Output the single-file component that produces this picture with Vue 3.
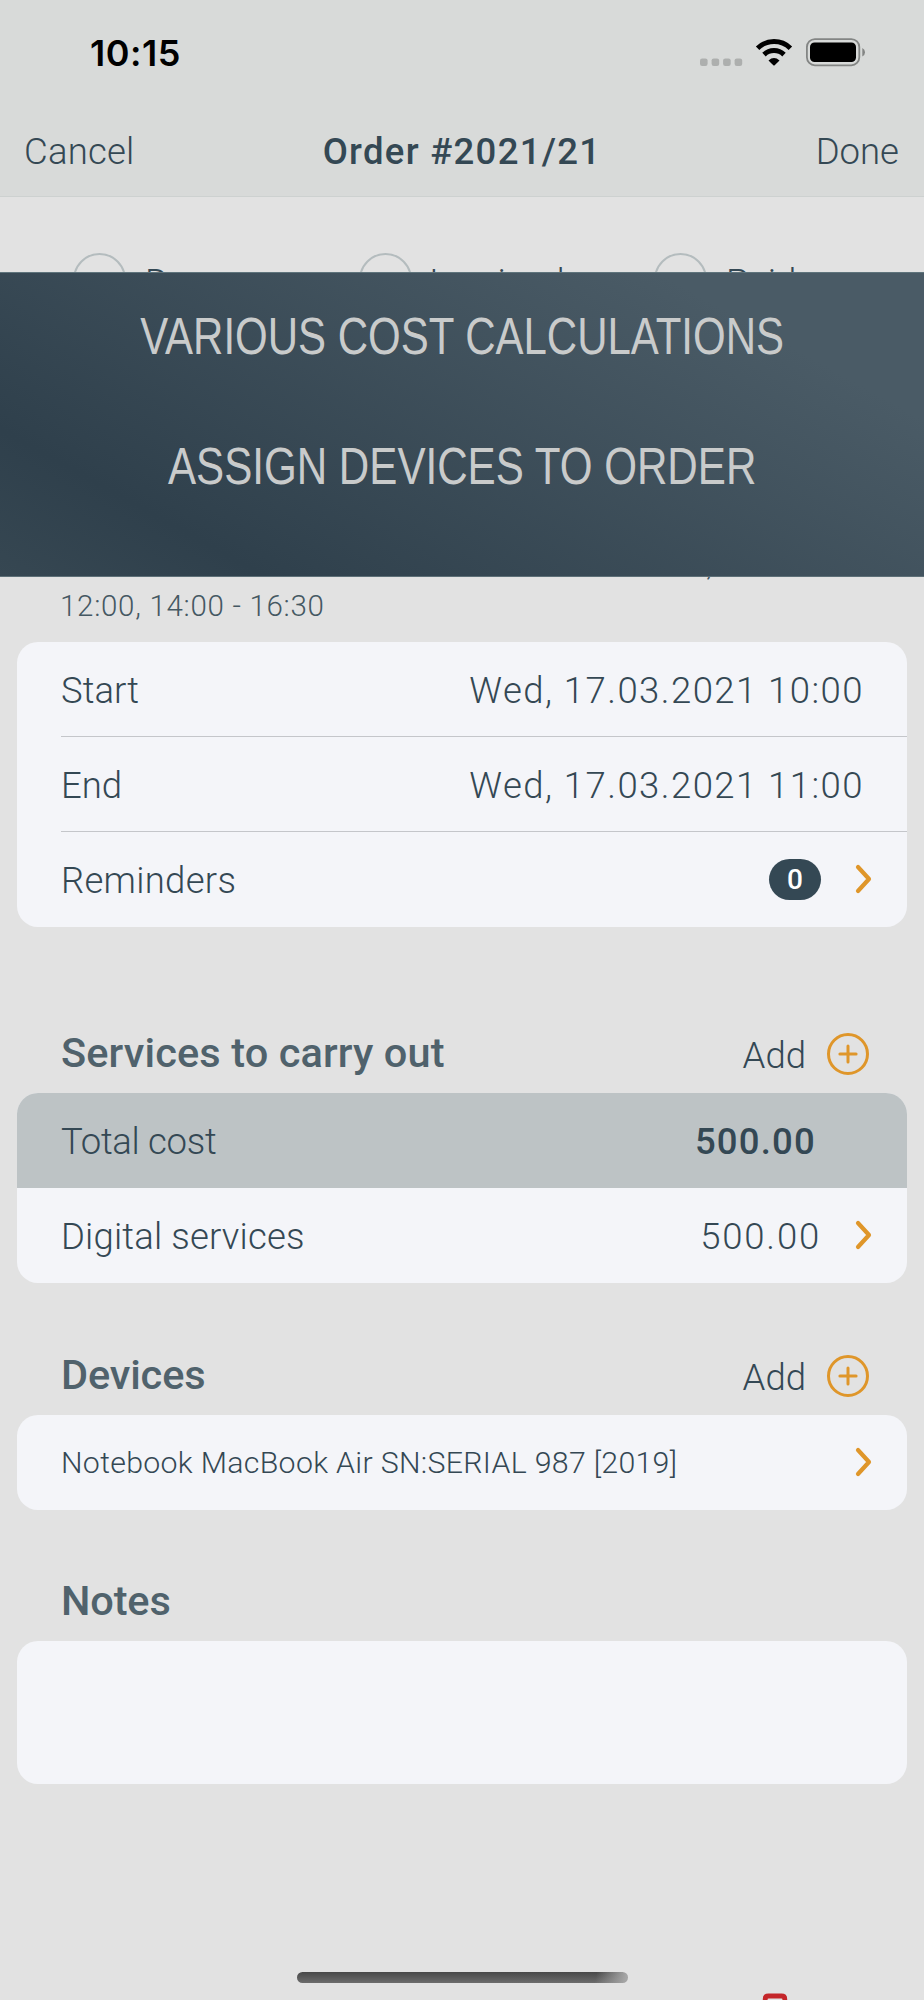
<script setup>
const states = [
  { label: 'Done', cls: 'st-done' },
  { label: 'Invoiced', cls: 'st-invoiced' },
  { label: 'Paid', cls: 'st-paid' },
]
</script>

<template>
  <div class="screen">
    <header class="top">
      <div class="status">
        <span class="clock">10:15</span>
        <svg class="sysicons" width="170" height="32" viewBox="0 0 170 32">
          <g fill="#adafae">
            <rect x="3" y="22.4" width="7.6" height="7.6" rx="2.2" />
            <rect x="14.6" y="22.4" width="7.6" height="7.6" rx="2.2" />
            <rect x="26.1" y="22.4" width="7.6" height="7.6" rx="2.2" />
            <rect x="37.6" y="22.4" width="7.6" height="7.6" rx="2.2" />
          </g>
          <g fill="none" stroke="#000" stroke-width="5">
            <path d="M60.6 12.2 A23.5 23.5 0 0 1 93.4 12.2" />
            <path d="M67 18.6 A14.5 14.5 0 0 1 87 18.6" />
          </g>
          <path d="M71.5 24.4 Q77 19.6 82.5 24.4 L77.7 29.2 Q77 29.8 76.3 29.2 Z" fill="#000" />
          <rect x="109.9" y="3.1" width="52.4" height="26.2" rx="8" fill="none" stroke="#838584" stroke-width="1.8" />
          <rect x="113" y="6.4" width="46" height="19.6" rx="4.6" fill="#000" />
          <path d="M165.3 12 Q168 13.2 168 16.3 Q168 19.4 165.3 20.6 Z" fill="#838584" />
        </svg>
      </div>
      <nav class="nav">
        <span class="cancel">Cancel</span>
        <span class="title">Order #2021/21</span>
        <span class="done">Done</span>
      </nav>
    </header>

    <div class="states">
      <div v-for="s in states" :key="s.label" class="state" :class="s.cls">
        <i class="radio"></i><span>{{ s.label }}</span>
      </div>
    </div>

    <section class="banner">
      <p class="b1"><span>VARIOUS COST CALCULATIONS</span></p>
      <p class="b2"><span>ASSIGN DEVICES TO ORDER</span></p>
    </section>

    <div class="hours">
      <div class="prev-line"><span>08:00 - 10:00, 11:00 -</span></div>
      <div class="hline"><span>12:00, 14:00 - 16:30</span></div>
    </div>

    <div class="card">
      <div class="row"><span>Start</span><span class="date">Wed, 17.03.2021 10:00</span></div>
      <div class="row line"><span>End</span><span class="date">Wed, 17.03.2021 11:00</span></div>
      <div class="row line">
        <span class="l-rem">Reminders</span>
        <b class="badge">0</b>
        <svg class="chev" width="18" height="32" viewBox="0 0 18 32"><path d="M4 4 L15 16 L4 28" /></svg>
      </div>
    </div>

    <div class="head h1">
      <h2 class="t-serv">Services to carry out</h2>
      <span class="add">Add</span>
      <svg class="plus" width="44" height="44" viewBox="0 0 44 44"><circle cx="22" cy="22" r="19.5" /><path d="M22 13.9V30.1M13.9 22H30.1" /></svg>
    </div>
    <div class="card">
      <div class="row total"><span class="l-total">Total cost</span><span class="sum">500.00</span></div>
      <div class="row">
        <span class="l-dig">Digital services</span>
        <span class="price">500.00</span>
        <svg class="chev" width="18" height="32" viewBox="0 0 18 32"><path d="M4 4 L15 16 L4 28" /></svg>
      </div>
    </div>

    <div class="head h2">
      <h2 class="t-dev">Devices</h2>
      <span class="add">Add</span>
      <svg class="plus" width="44" height="44" viewBox="0 0 44 44"><circle cx="22" cy="22" r="19.5" /><path d="M22 13.9V30.1M13.9 22H30.1" /></svg>
    </div>
    <div class="card">
      <div class="row">
        <span class="device">Notebook MacBook Air SN:SERIAL 987 [2019]</span>
        <svg class="chev" width="18" height="32" viewBox="0 0 18 32"><path d="M4 4 L15 16 L4 28" /></svg>
      </div>
    </div>

    <div class="head h3"><h2 class="t-dev">Notes</h2></div>
    <div class="card notes"></div>

    <div class="home"></div>
    <svg class="trash" width="28" height="8" viewBox="0 0 28 8"><path d="M4.2 9V7Q4.2 4 7.5 4H20.5Q23.8 4 23.8 7V9" fill="none" stroke="#c4262a" stroke-width="4.8" /></svg>
  </div>
</template>

<style>
html, body { margin: 0; background: #e2e2e2; }
</style>

<style scoped>
.screen {
  position: relative;
  width: 924px;
  height: 2000px;
  overflow: hidden;
  background: #e2e2e2;
  color: #344854;
  font-family: Roboto, "Liberation Sans", sans-serif;
  font-weight: 300;
  font-size: 36.5px;
  line-height: 1;
  white-space: nowrap;
}
.screen * { box-sizing: border-box; }
.top { height: 197px; background: #d8dad9; border-bottom: 1px solid #cdd1d0; }
.status { height: 106px; display: flex; justify-content: space-between; padding: 36px 57px 0 90px; }
.clock { font: 600 36px/34px Inter, sans-serif; color: #000; letter-spacing: 0.5px; }
.nav { height: 91px; display: grid; grid-template-columns: 1fr auto 1fr; align-items: center; padding: 1px 24px 0; }
.nav .cancel { letter-spacing: 0.2px; }
.nav .done { text-align: right; padding-right: 1px; }
.title { font-weight: 500; letter-spacing: 1.3px; }
.states { height: 75px; overflow: hidden; display: flex; padding: 56px 0 0 73px; }
.state { display: flex; align-items: center; height: 53px; gap: 19px; }
.state span { padding-top: 7px; }
.radio { width: 53px; height: 53px; border: 2px solid #b4bcbe; border-radius: 50%; flex: none; }
.st-done { width: 286px; }
.st-invoiced { width: 295px; gap: 17px; letter-spacing: 0.25px; }
.banner {
  height: 305px;
  padding-top: 39px;
  background: linear-gradient(29deg, #364752 0%, #2f404c 18%, #4a5b66 82%, #4a5b66 100%);
  border-top: 1px solid #5f747c;
  border-bottom: 1px solid #5d6f77;
  color: #c9cbcb;
  font: 400 51px/50px "Liberation Sans", Arial, sans-serif;
}
.banner p { margin: 0; height: 50px; display: flex; justify-content: center; }
.banner span { transform: scaleX(0.823); }
.banner .b2 { margin-top: 80px; }
.banner .b2 span { transform: scaleX(0.826); }
.hours { height: 65px; padding-left: 60px; font-size: 29.5px; color: #455862; overflow: hidden; letter-spacing: 0.7px; }
.prev-line { height: 6px; line-height: 34px; display: flex; align-items: flex-end; padding-left: 471px; overflow: hidden; }
.prev-line span { height: 34px; }
.hline { height: 48px; display: flex; align-items: center; }
.card { width: 890px; margin: 0 auto; border-radius: 21px; overflow: hidden; background: #f4f5f9; }
.row { height: 95px; display: flex; align-items: center; padding-left: 44px; position: relative; }
.row > :first-child { margin-right: auto; }
.row span { padding-top: 3px; }
.line::before { content: ""; position: absolute; left: 44px; right: 0; top: -1px; height: 1px; background: #c4c6ca; }
.total { background: #bdc3c5; }
.date { margin-right: 43px; letter-spacing: 1.45px; }
.badge { width: 52px; height: 41px; border-radius: 20.5px; background: #344854; color: #fff; font-weight: 500; font-size: 28px; line-height: 41px; text-align: center; margin: 0 33px 1px 0; }
.chev { margin: 0 35px 1px 0; flex: none; fill: none; stroke: #df962a; stroke-width: 4.2; stroke-linecap: round; stroke-linejoin: round; }
.l-rem { letter-spacing: 0.28px; }
.l-total { letter-spacing: -0.3px; }
.l-dig { letter-spacing: 0.17px; }
.sum { font-weight: 500; margin-right: 91px; letter-spacing: 1.2px; }
.price { margin-right: 33px; letter-spacing: 1.8px; }
.head { display: flex; align-items: flex-end; padding: 0 54px 0 61px; }
.head h2 { margin: 0 auto 18px 0; font-size: 41.5px; font-weight: 500; line-height: 44px; color: #50626c; }
.t-serv { letter-spacing: 0.12px; }
.t-dev { letter-spacing: -0.15px; }
.add { margin: 0 20px 17px 0; line-height: 40px; }
.plus { margin-bottom: 17px; fill: none; stroke: #df962a; stroke-width: 3; stroke-linecap: round; }
.h1 { height: 166px; }
.h2 { height: 132px; }
.h3 { height: 131px; }
.row .device { font-size: 30.3px; letter-spacing: 0.31px; padding-top: 1px; }
.notes { height: 143px; }
.home { position: absolute; left: 297px; top: 1972px; width: 331px; height: 11px; border-radius: 6px; background: linear-gradient(100deg, transparent 90%, #a5a5a5 99%), linear-gradient(#484848, #6c6c6c); }
.trash { position: absolute; left: 761px; top: 1992px; }
</style>
